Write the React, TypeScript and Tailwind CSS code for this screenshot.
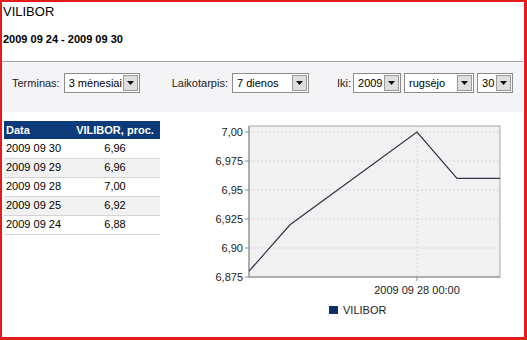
const rows = [
  { date: '2009 09 30', value: '6,96' },
  { date: '2009 09 29', value: '6,96' },
  { date: '2009 09 28', value: '7,00' },
  { date: '2009 09 25', value: '6,92' },
  { date: '2009 09 24', value: '6,88' },
];

// chart geometry, svg coords (svg placed at page x=200, y=112)
const plot = { left: 49, right: 300, top: 14, bottom: 165 };
const yOf = (v: number) => 20 + ((7.0 - v) / 0.025) * 29;
const ticks = [
  { v: 7.0, label: '7,00' },
  { v: 6.975, label: '6,975' },
  { v: 6.95, label: '6,95' },
  { v: 6.925, label: '6,925' },
  { v: 6.9, label: '6,90' },
  { v: 6.875, label: '6,875' },
];
const points: [number, number][] = [
  [49, yOf(6.88)],
  [90, yOf(6.92)],
  [217, yOf(7.0)],
  [257, yOf(6.96)],
  [300, yOf(6.96)],
];

function Select({ value, className }: { value: string; className: string }) {
  return (
    <div className={`flex items-center h-[20px] border border-[#8c8c8c] bg-white ${className}`}>
      <span className="flex-1 pl-[4px] text-[11px] leading-none text-black truncate">{value}</span>
      <div className="w-[15px] h-[16px] mr-[1px] bg-[#dedede] border border-[#9a9a9a] flex items-center justify-center">
        <svg width="7" height="4" viewBox="0 0 7 4">
          <path d="M0 0 H7 L3.5 4 Z" fill="#111" />
        </svg>
      </div>
    </div>
  );
}

export default function App() {
  return (
    <div
      className="w-[527px] h-[340px] bg-white border-l-2 border-t-2 border-r-[3px] border-b-[3px] border-[#e31b1b] overflow-hidden text-black"
      style={{ fontFamily: '"Liberation Sans", Arial, sans-serif' }}
    >
      <div className="pl-[1px] mt-[2px] text-[13px] leading-[16px]">VILIBOR</div>
      <div className="pl-[1px] mt-[13px] text-[11px] leading-[13px] font-bold">2009 09 24 - 2009 09 30</div>

      <div className="mt-[15px] mr-[1px] border-t border-[#a3a3a3] bg-[#f4f3f6] h-[51px] pt-[11px] pl-[10px] flex items-start text-[11px]">
        <span className="leading-[20px] text-[#222]">Terminas:</span>
        <Select value="3 mėnesiai" className="ml-[4px] w-[76px]" />
        <span className="ml-[32px] leading-[20px] text-[#222]">Laikotarpis:</span>
        <Select value="7 dienos" className="ml-[4px] w-[77px]" />
        <span className="ml-[28px] leading-[20px] text-[#222]">Iki:</span>
        <Select value="2009" className="ml-[2px] w-[48px]" />
        <Select value="rugsėjo" className="ml-[3px] w-[70px]" />
        <Select value="30" className="ml-[3px] w-[36px]" />
      </div>

      <div className="flex">
        <table className="ml-[2px] mt-[9px] w-[156px] self-start border-collapse text-[11px]">
          <thead>
            <tr className="bg-[#0c3a7a] text-white h-[18px]">
              <th className="w-[66px] text-left pl-[2px] font-bold">Data</th>
              <th className="text-center font-bold">VILIBOR, proc.</th>
            </tr>
          </thead>
          <tbody>
            {rows.map((r, i) => (
              <tr key={r.date} className={`h-[19px] border-b border-[#d4d4d4] ${i % 2 === 1 ? 'bg-[#f1f1f1]' : 'bg-white'}`}>
                <td className="pl-[2px]">{r.date}</td>
                <td className="text-center">{r.value}</td>
              </tr>
            ))}
          </tbody>
        </table>

        <svg width="320" height="215" className="ml-[40px] shrink-0" style={{ fontFamily: '"Liberation Sans", Arial, sans-serif' }}>
          <rect x={plot.left} y={plot.top} width={plot.right - plot.left} height={plot.bottom - plot.top} fill="#f1f1f1" stroke="#a8a8a8" />
          {ticks.map((t) => (
            <g key={t.label}>
              <line x1={plot.left} x2={plot.right} y1={yOf(t.v)} y2={yOf(t.v)} stroke="#d6d6d6" strokeDasharray="2 2" />
              <line x1={plot.left - 4} x2={plot.left} y1={yOf(t.v)} y2={yOf(t.v)} stroke="#8a8a8a" />
              <text x={43} y={yOf(t.v) + 4} textAnchor="end" fontSize="11" fill="#222">
                {t.label}
              </text>
            </g>
          ))}
          <line x1={217} x2={217} y1={plot.top} y2={plot.bottom} stroke="#d6d6d6" strokeDasharray="2 2" />
          <line x1={plot.left} x2={plot.right} y1={plot.bottom} y2={plot.bottom} stroke="#8a8a8a" />
          <line x1={plot.left} x2={plot.left} y1={plot.top} y2={plot.bottom} stroke="#8a8a8a" />
          <line x1={217} x2={217} y1={plot.bottom} y2={plot.bottom + 4} stroke="#8a8a8a" />
          <polyline points={points.map((p) => p.join(',')).join(' ')} fill="none" stroke="#2e3548" strokeWidth="1.2" />
          <text x={217} y={182} textAnchor="middle" fontSize="11" fill="#222">
            2009 09 28 00:00
          </text>
          <rect x={129} y={194} width={9} height={8} fill="#0c3160" />
          <text x={143} y={202} fontSize="11" fill="#222">
            VILIBOR
          </text>
        </svg>
      </div>
    </div>
  );
}
